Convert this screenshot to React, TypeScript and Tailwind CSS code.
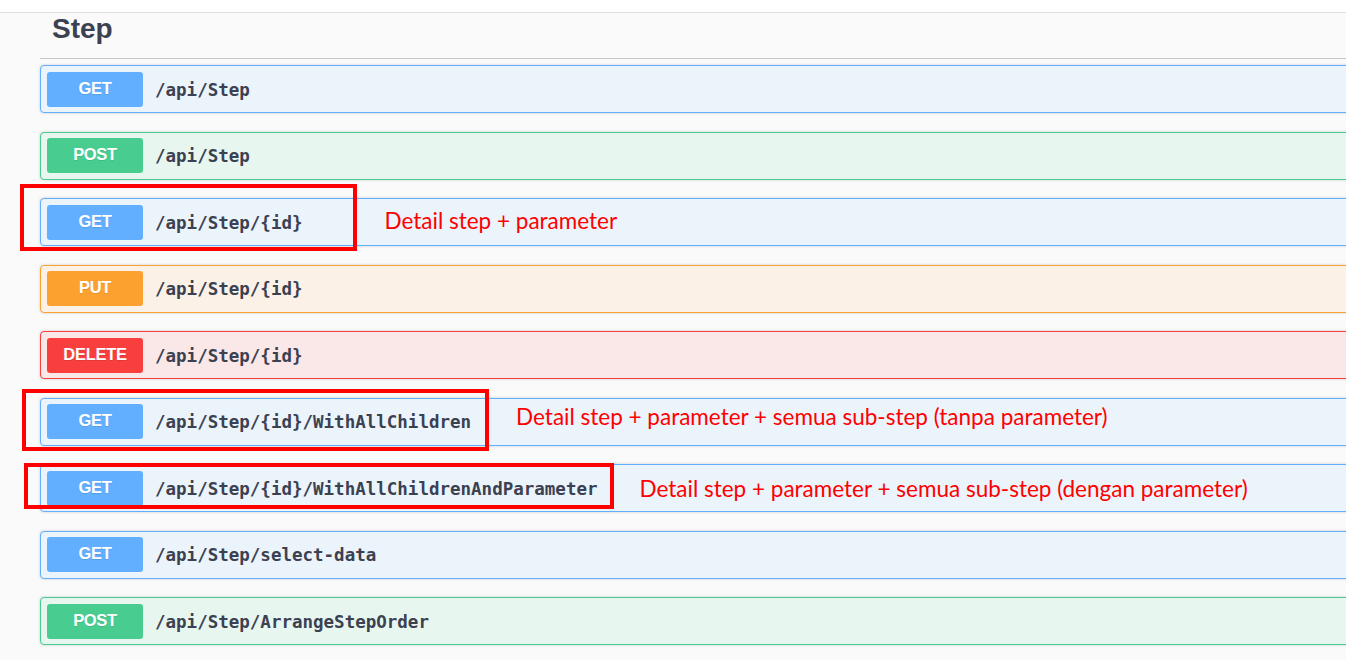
import React from "react";

type Method = "GET" | "POST" | "PUT" | "DELETE";

const styles: Record<Method, { row: string; badge: string }> = {
  GET: { row: "border-[#61affe] bg-[#ebf3fb]", badge: "bg-[#61affe]" },
  POST: { row: "border-[#49cc90] bg-[#e8f6f0]", badge: "bg-[#49cc90]" },
  PUT: { row: "border-[#fca130] bg-[#fbf1e6]", badge: "bg-[#fca130]" },
  DELETE: { row: "border-[#f93e3e] bg-[#fae7e7]", badge: "bg-[#f93e3e]" },
};

// note/noteClass: red annotation written next to the path
const ops: { method: Method; path: string; note?: string; noteClass?: string }[] = [
  { method: "GET", path: "/api/Step" },
  { method: "POST", path: "/api/Step" },
  {
    method: "GET",
    path: "/api/Step/{id}",
    note: "Detail step + parameter",
    noteClass: "ml-[82px] mt-[-2px]",
  },
  { method: "PUT", path: "/api/Step/{id}" },
  { method: "DELETE", path: "/api/Step/{id}" },
  {
    method: "GET",
    path: "/api/Step/{id}/WithAllChildren",
    note: "Detail step + parameter + semua sub-step (tanpa parameter)",
    noteClass: "ml-[45px] mt-[-9px]",
  },
  {
    method: "GET",
    path: "/api/Step/{id}/WithAllChildrenAndParameter",
    note: "Detail step + parameter + semua sub-step (dengan parameter)",
    noteClass: "ml-[42px] mt-[2px]",
  },
  { method: "GET", path: "/api/Step/select-data" },
  { method: "POST", path: "/api/Step/ArrangeStepOrder" },
];

function OpRow({
  method,
  path,
  note,
  noteClass,
}: {
  method: Method;
  path: string;
  note?: string;
  noteClass?: string;
}) {
  const s = styles[method];
  return (
    <div
      className={`flex items-center h-[48px] border rounded-[4px] pl-[6px] shadow-[0_0_3px_rgba(0,0,0,0.19)] ${s.row}`}
    >
      <div
        className={`w-[96px] h-[35px] shrink-0 rounded-[3px] flex items-center justify-center pb-[2px] text-white font-bold text-[16.5px] tracking-[-0.3px] [text-shadow:0_1px_0_rgba(0,0,0,0.1)] ${s.badge}`}
        style={{ fontFamily: '"Liberation Sans", Arial, sans-serif' }}
      >
        {method}
      </div>
      <span
        className="ml-[12px] mt-[2px] text-[#3b4151] font-bold text-[17.5px] whitespace-nowrap"
        style={{ fontFamily: '"DejaVu Sans Mono", monospace' }}
      >
        {path}
      </span>
      {note && (
        <span
          className={`text-[#ff0000] text-[22.5px] leading-none whitespace-nowrap ${noteClass}`}
          style={{ fontFamily: 'Lato, "Noto Sans", sans-serif' }}
        >
          {note}
        </span>
      )}
    </div>
  );
}

export default function App() {
  return (
    <div className="w-[1346px] h-[660px] overflow-hidden bg-white">
      <div className="relative mt-[12px] h-[648px] border-t border-[#e0e0e0] bg-[#fafafa]">
        <div className="pl-[40px] -mr-[20px]">
          {/* Tag header */}
          <div className="h-[46px] border-b border-[#c4c5c8] flex items-center pl-[12px]">
            <h2
              className="text-[28px] font-bold text-[#3b4151] -mt-[14px]"
              style={{ fontFamily: '"Liberation Sans", Arial, sans-serif' }}
            >
              Step
            </h2>
          </div>

          {/* Operations */}
          <div className="pt-[6px] flex flex-col gap-[18.5px]">
            {ops.map((op, i) => (
              <OpRow key={i} {...op} />
            ))}
          </div>
        </div>

        {/* Red highlight boxes drawn over the screenshot */}
        <div className="absolute left-[20px] top-[171px] w-[337px] h-[67px] border-[4px] border-[#ff0000]" />
        <div className="absolute left-[22px] top-[376px] w-[467px] h-[62px] border-[4px] border-[#ff0000]" />
        <div className="absolute left-[24px] top-[450px] w-[590px] h-[46px] border-[4px] border-[#ff0000]" />
      </div>
    </div>
  );
}
